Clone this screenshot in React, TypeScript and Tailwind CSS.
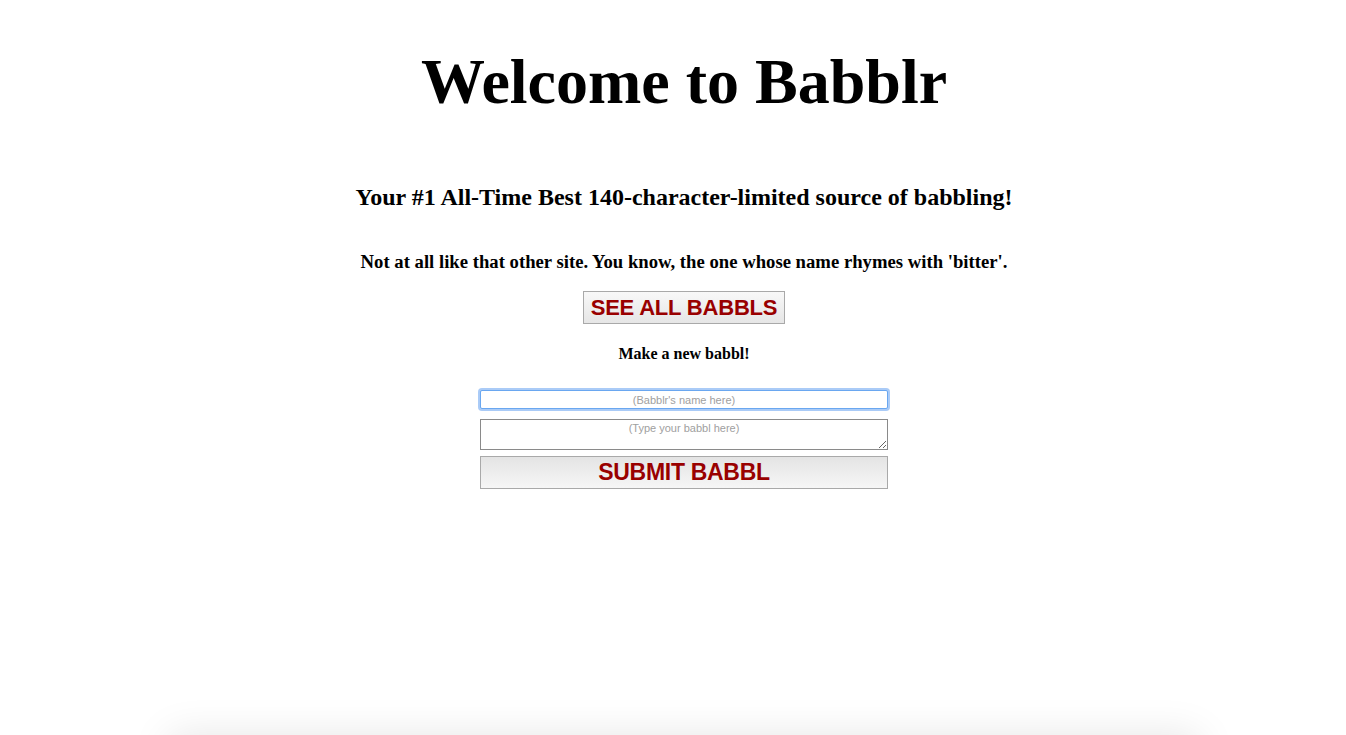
export default function App() {
  return (
    <div className="min-h-screen bg-white pl-[22px] text-black [font-family:'Liberation_Serif','Times_New_Roman',serif]">
      <div className="flex flex-col items-center pt-[38px] text-center">
        <h1 className="text-[64px] font-bold leading-[88px]">Welcome to Babblr</h1>

        <h3 className="mt-[56px] text-[24px] font-bold leading-[30px]">
          Your #1 All-Time Best 140-character-limited source of babbling!
        </h3>

        <h4 className="mt-[38px] text-[18.7px] font-bold leading-[24px]">
          Not at all like that other site. You know, the one whose name rhymes with 'bitter'.
        </h4>

        <button className="mt-[17px] h-[33px] whitespace-nowrap border border-[#a9a9a9] bg-gradient-to-b from-[#f8f8f8] to-[#e6e6e6] px-[7px] text-[22px] font-bold leading-none tracking-[-0.2px] text-[#990000] [font-family:'Liberation_Sans',Arial,sans-serif]">
          SEE ALL BABBLS
        </button>

        <h5 className="mt-[20px] text-[16px] font-bold leading-[20px]">Make a new babbl!</h5>

        <form className="mt-[26px] flex w-[408px] flex-col [font-family:'Liberation_Sans',Arial,sans-serif]">
          <input
            autoFocus
            placeholder="(Babblr's name here)"
            className="h-[19px] w-full rounded-[2px] border border-[#6aa7f0] bg-white px-1 text-center text-[11px] text-[#333] outline-none shadow-[0_0_0_2px_rgba(100,160,240,0.55)] placeholder:text-[#a0a0a0]"
          />
          <textarea
            placeholder="(Type your babbl here)"
            className="mt-[10px] h-[31px] w-full border border-[#8a8a8a] bg-white px-1 pt-[2px] text-center text-[11px] leading-[13px] text-[#333] outline-none placeholder:text-[#a0a0a0]"
          />
          <button
            type="button"
            className="mt-[6px] h-[33px] w-full whitespace-nowrap border border-[#a9a9a9] bg-gradient-to-b from-[#e4e4e4] to-[#f6f6f6] text-[23px] font-bold leading-none tracking-[-0.3px] text-[#990000]"
          >
            SUBMIT BABBL
          </button>
        </form>
      </div>

      <div className="mx-auto mt-[256px] h-[60px] w-[1010px] bg-white shadow-[0_0_40px_10px_rgba(0,0,0,0.1)]" />
    </div>
  );
}
